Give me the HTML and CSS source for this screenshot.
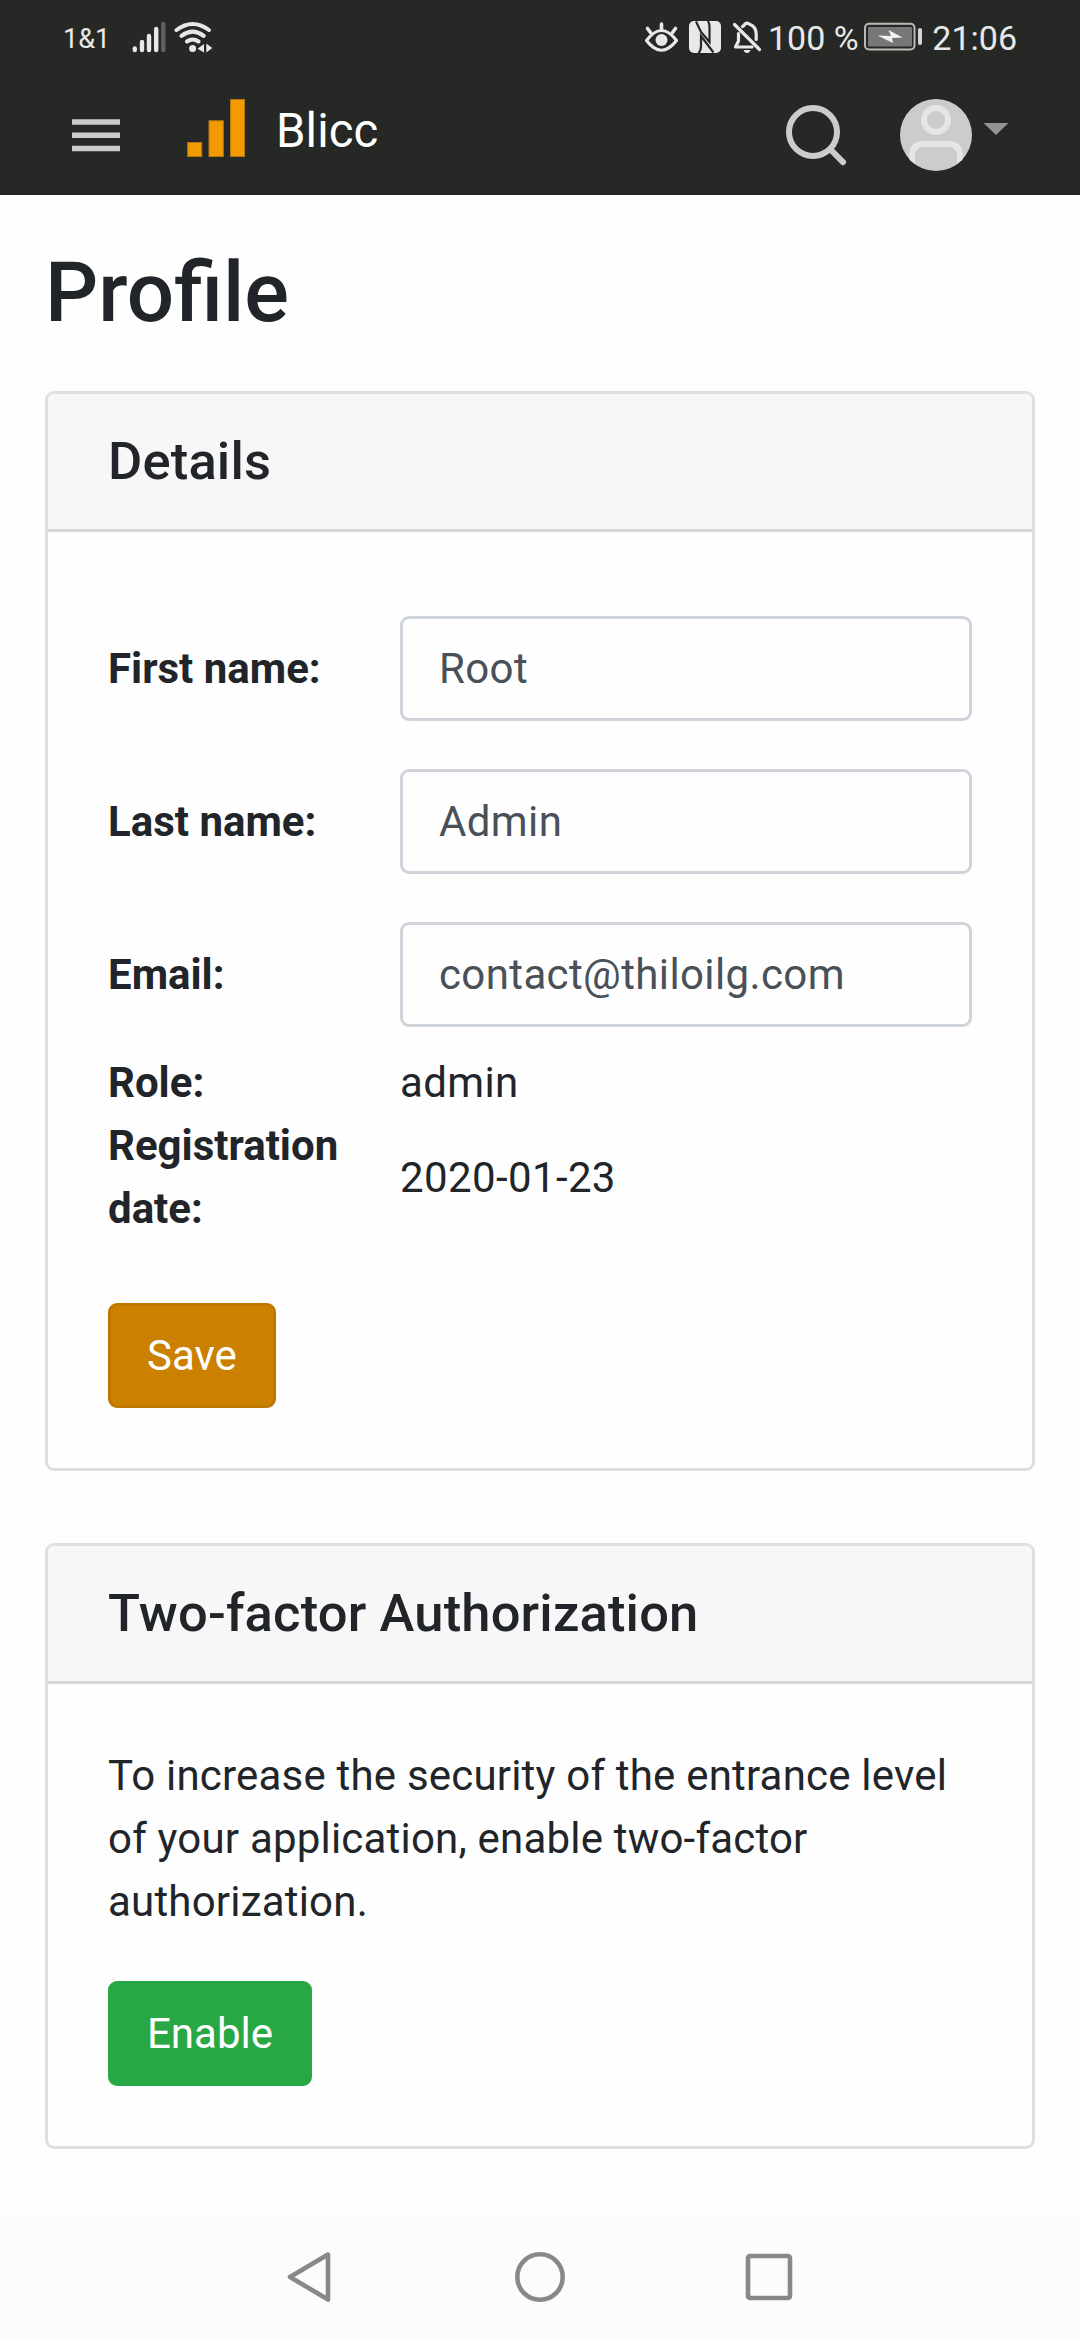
FILE: index.html
```html
<!DOCTYPE html>
<html lang="en">
<head>
<meta charset="utf-8">
<title>Blicc – Profile</title>
<link rel="stylesheet" href="styles.css">
</head>
<body>
<div class="status-bar">
  <span class="carrier">1&amp;1</span>
  <svg class="signal-icons" width="84" height="36" viewBox="132 18 84 36">
    <g stroke="#e8e8e8" stroke-width="4.4" stroke-linecap="round">
      <path d="M134.8 48.5V50M142 42V50M149 36V50M156.2 29V50"/>
      <path d="M163.3 24V50" stroke="#5e605e"/>
    </g>
    <g fill="none" stroke="#e8e8e8" stroke-width="4" stroke-linecap="round">
      <path d="M176.5 30Q192.700 18 208.900 30M181.500 35.800Q192.700 27.500 203.700 35.800M187 41.500Q192.700 37.500 198.500 41.500"/>
    </g>
    <circle cx="192.600" cy="48.500" r="3.500" fill="#e8e8e8"/>
    <path d="M204 44v8.500l-6.500-3.700zM206.300 43.500v9l6-4.500z" fill="#e8e8e8"/>
  </svg>
  <div class="status-right">
    <svg width="120" height="36" viewBox="643 18 120 36">
      <g fill="none" stroke="#e8e8e8" stroke-width="3.600" stroke-linecap="round" stroke-linejoin="round">
        <path d="M646.500 40.500Q661.500 20.500 676.500 40.500Q661.500 60 646.500 40.500Z" stroke-width="3.200"/>
        <path d="M661.500 24V29M647.500 28.500L650.500 32.500M675.500 28.500L672.500 32.500"/>
      </g>
      <circle cx="661.500" cy="40" r="6" fill="#e8e8e8"/>
      <rect x="689" y="21" width="32" height="32" rx="5" fill="#e8e8e8"/>
      <path d="M696 21.500L701 32L709.500 42V27Q709.500 23.500 708 21M713.500 52.500L701 36V46Q701 50.500 698.500 53" fill="none" stroke="#262826" stroke-width="2.200"/>
      <g fill="none" stroke="#e8e8e8" stroke-width="3.200" stroke-linecap="round" stroke-linejoin="round">
        <path d="M734.500 24.500L759.500 49.500M738.500 33.500V41L735.500 47H752M742.500 26.500Q744.500 25.500 745 24Q747 22.300 749 24Q756.200 26.500 756.200 34V39.500"/>
      </g>
      <path d="M743.500 50h7q-1 3-3.500 3t-3.500-3z" fill="#e8e8e8"/>
    </svg>
    <span class="battery-level">100 %</span>
    <svg class="battery" width="60" height="30" viewBox="866 22 60 30">
      <rect x="868" y="24.800" width="49.500" height="25.700" rx="4" fill="none" stroke="#b9bab4" stroke-width="2"/>
      <rect x="871" y="28" width="44" height="19.500" rx="1" fill="#777"/>
      <path d="M880.500 36.500L894 37L891.500 31L905.500 38.500L895 39L896 44Z" fill="#f2f2f2"/>
      <rect x="921" y="29" width="4" height="17" rx="2" fill="#d5d5d5"/>
    </svg>
    <span class="clock">21:06</span>
  </div>
</div>
<header class="navbar">
  <svg class="menu-icon" width="48" height="33" viewBox="0 0 48 33"><path d="M0 3H48M0 16.200H48M0 29.400H48" stroke="#ccc" stroke-width="5.500"/></svg>
  <svg class="logo" width="60" height="60" viewBox="0 0 60 60" fill="#f39a00" stroke="#b5771a">
    <rect x=".7" y="43.500" width="14" height="14"/><rect x="22" y="21.800" width="14.300" height="35.700"/><rect x="43.500" y=".5" width="14" height="57"/>
  </svg>
  <span class="brand">Blicc</span>
  <svg class="search-icon" width="62" height="62" viewBox="0 0 62 62" fill="none" stroke="#ccc" stroke-width="6" stroke-linecap="round"><circle cx="27" cy="27" r="24"/><path d="M45 45L57 57.200"/></svg>
  <svg class="avatar" width="72" height="72" viewBox="0 0 72 72">
    <clipPath id="disc"><circle cx="36" cy="36" r="36"/></clipPath>
    <g clip-path="url(#disc)"><rect width="72" height="72" fill="#ccc"/>
      <g fill="none" stroke="#e6e6e6" stroke-width="6"><circle cx="36" cy="21" r="12"/><path d="M12 75V57Q12 45 24 45H48Q60 45 60 57V75"/></g></g>
  </svg>
  <svg class="caret" width="26" height="12" viewBox="0 0 26 12"><path d="M.5 0H25.500L13 12Z" fill="#929392"/></svg>
</header>
<main class="content">
  <h1>Profile</h1>
  <section class="card">
    <h5 class="card-header">Details</h5>
    <form class="card-body">
      <div class="row"><label for="first">First name:</label><input id="first" type="text" value="Root"></div>
      <div class="row"><label for="last">Last name:</label><input id="last" type="text" value="Admin"></div>
      <div class="row"><label for="email">Email:</label><input id="email" type="text" value="contact@thiloilg.com"></div>
      <div class="row static"><b>Role:</b><span>admin</span></div>
      <div class="row static"><b>Registration date:</b><span>2020-01-23</span></div>
      <button class="btn save" type="button">Save</button>
    </form>
  </section>
  <section class="card">
    <h5 class="card-header">Two-factor Authorization</h5>
    <div class="card-body">
      <p>To increase the security of the entrance level of your application, enable two-factor authorization.</p>
      <button class="btn enable" type="button">Enable</button>
    </div>
  </section>
</main>
<nav class="system-nav">
  <svg width="50" height="52" viewBox="0 0 50 52"><path d="M42 3.500L4 26L42 48.500Z"/></svg>
  <svg width="50" height="52" viewBox="0 0 50 52"><circle cx="25" cy="26" r="22.700"/></svg>
  <svg width="50" height="52" viewBox="0 0 50 52"><rect x="4" y="5" width="42" height="42" rx="2"/></svg>
</nav>
</body>
</html>
```
FILE: styles.css
```css
* { box-sizing: border-box; }
body {
  margin: 0;
  height: 2340px;
  display: flex;
  flex-direction: column;
  overflow: hidden;
  background: #fefefe;
  color: #212529;
  font: 42px/63px Roboto, sans-serif;
}
svg { display: block; flex: none; }

.status-bar {
  flex: none;
  height: 75px;
  display: flex;
  align-items: center;
  padding: 0 63px 0 63px;
  background: #262826;
  color: #e8e8e8;
  line-height: 36px;
  white-space: nowrap;
}
.carrier { width: 69px; font-size: 27px; padding-top: 2px; }
.signal-icons { margin-bottom: 3px; }
.status-right { display: flex; align-items: center; margin-left: auto; width: 374px; font-size: 34px; }
.status-right svg { margin-bottom: 3px; }
.battery-level { width: 98px; margin-left: 5px; }
.battery { margin-right: 9px; }

.navbar {
  flex: none;
  height: 120px;
  display: flex;
  align-items: flex-start;
  padding: 24px 71px 0 72px;
  background: #262826;
  border-bottom: 2px solid #222422;
}
.menu-icon { margin-top: 20px; }
.logo { margin-left: 67px; }
.brand { margin: 1px auto 0 29px; color: #fff; font-size: 47.250px; letter-spacing: .1px; }
.search-icon { margin: 6px 52px 0 0; }
.avatar { margin-right: 11px; }
.caret { margin-top: 24px; }

.content { flex: 1; padding: 47px 45px 0; }
h1, h5, p { margin: 0; }
h1 { font-size: 83.500px; font-weight: 500; line-height: 101px; margin-bottom: 48px; }
.card { border: 3px solid #dfdfdf; border-radius: 9px; }
.card + .card { margin-top: 72px; }
.card-header {
  padding: 36px 60px;
  font-size: 52.500px;
  font-weight: 500;
  letter-spacing: .17px;
  background: #f7f7f7;
  border-bottom: 3px solid #d8d8d8;
  border-radius: 6px 6px 0 0;
}
.card-body { padding: 60px; }
.row { display: grid; grid-template-columns: 292px 1fr; align-items: center; padding: 24px 0; }
.row.static { padding: 0; }
.row span { letter-spacing: .38px; }
p { letter-spacing: .2px; }
label, b { font-weight: 700; padding-right: 45px; }
input {
  width: 100%;
  height: 105px;
  padding: 18px 36px;
  border: 3px solid #ced4da;
  border-radius: 9px;
  background: #fefefe;
  color: #495057;
  font: inherit;
  letter-spacing: .38px;
}
.btn {
  display: block;
  height: 105px;
  padding: 18px 36px;
  border: 3px solid;
  border-radius: 9px;
  color: #fff;
  font: inherit;
}
.save { margin-top: 63px; background: #cb8000; border-color: #be7800; }
.enable { margin-top: 48px; background: #28a745; border-color: #28a745; }

.system-nav {
  flex: none;
  height: 126px;
  display: flex;
  justify-content: center;
  gap: 179px;
  padding-top: 37px;
  background: #fcfcfc;
}
.system-nav svg { fill: none; stroke: #888; stroke-width: 4.600; stroke-linejoin: round; }
```
